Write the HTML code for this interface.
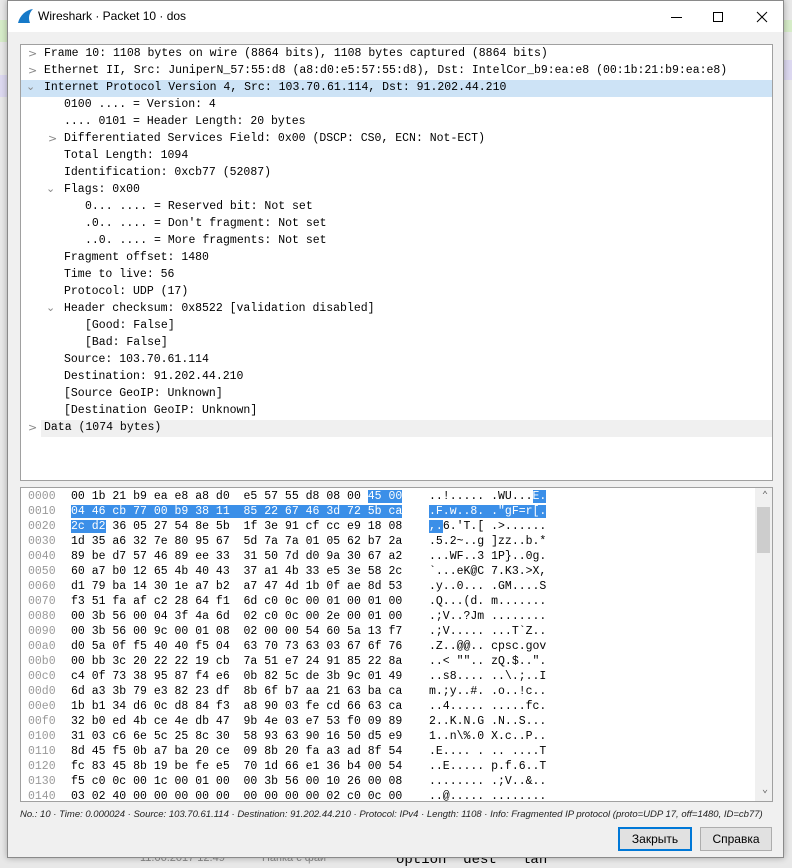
<!DOCTYPE html>
<html><head><meta charset="utf-8"><style>
*{margin:0;padding:0;box-sizing:border-box}
body{width:792px;height:868px;background:#e8e8e8;position:relative;overflow:hidden;font-family:"Liberation Sans",sans-serif}
.win{position:absolute;left:7px;top:0;width:777px;height:858px;background:#f0f0f0;border:1px solid #8a8a8a;box-shadow:0 0 6px rgba(0,0,0,.3)}
.title{position:absolute;left:0;top:0;right:0;height:31px;background:#fff}
.title .t{position:absolute;left:30px;top:8px;font-size:12px;color:#000}
.panel{position:absolute;background:#fff;border:1px solid #a0a0a0}
.mono{font-family:"Liberation Mono",monospace;font-size:11.5px;white-space:pre;color:#000}
.row{position:absolute;left:0;right:0;height:17px;line-height:17px}
.hr{position:absolute;left:0;height:15px;line-height:15px}
.arr{position:absolute;color:#888;font-size:11px;font-family:"DejaVu Sans",sans-serif}
.hl{background:#3b8fe8;color:#fff}
.off{position:absolute;left:7px;color:#999}
.hx{position:absolute;left:50px}
.as{position:absolute;left:408px}
.btn{position:absolute;top:826px;height:24px;border:1px solid #adadad;background:#e1e1e1;font-size:12px;text-align:center;line-height:22px}
</style></head><body>
<div style="position:absolute;left:0;top:20px;width:7px;height:22px;background:#d6ecc8"></div>
<div style="position:absolute;left:0;top:75px;width:7px;height:22px;background:#dcd8f0"></div>
<div style="position:absolute;left:784px;top:20px;width:8px;height:12px;background:#d6ecc8"></div>
<div style="position:absolute;left:784px;top:60px;width:8px;height:20px;background:#dcd8f0"></div>
<div style="position:absolute;left:140px;top:852px;font-size:11px;color:#888">11.06.2017 12:49</div>
<div style="position:absolute;left:262px;top:852px;font-size:11px;color:#888">Папка с фай</div>
<div style="position:absolute;left:396px;top:852px;font-size:14px;color:#000" class="mono">option  dest   lan</div>
<div class="win">
<div class="title">
<svg style="position:absolute;left:9px;top:8px" width="17" height="15" viewBox="0 0 17 15"><path d="M1 14 C3 6 9 1 16 0 C12 4 11 9 13 14 Z" fill="#1679c8"/></svg>
<div class="t">Wireshark · Packet 10 · dos</div>
<svg style="position:absolute;left:658px;top:10px" width="110" height="12"><path d="M5 6.5h11" stroke="#000"/><rect x="47.5" y="1.5" width="9" height="9" fill="none" stroke="#000"/><path d="M91 1l10 10M101 1l-10 10" stroke="#000"/></svg>
</div>
<div class="panel mono" style="left:12px;top:43px;width:753px;height:437px">
<div class="row" style="top:35px;background:#cde3f6"></div>
<div class="row" style="top:375px;left:20px;background:#f0f0f0"></div>
</div>
<div class="mono" style="position:absolute;left:12px;top:44px;width:753px;height:437px">
<span class="arr" style="left:8px;top:2px">&gt;</span><div class="row" style="top:0;left:24px">Frame 10: 1108 bytes on wire (8864 bits), 1108 bytes captured (8864 bits)</div>
<span class="arr" style="left:8px;top:19px">&gt;</span><div class="row" style="top:17px;left:24px">Ethernet II, Src: JuniperN_57:55:d8 (a8:d0:e5:57:55:d8), Dst: IntelCor_b9:ea:e8 (00:1b:21:b9:ea:e8)</div>
<span class="arr" style="left:6px;top:35px">&#8964;</span><div class="row" style="top:34px;left:24px">Internet Protocol Version 4, Src: 103.70.61.114, Dst: 91.202.44.210</div>
<div class="row" style="top:51px;left:44px">0100 .... = Version: 4</div>
<div class="row" style="top:68px;left:44px">.... 0101 = Header Length: 20 bytes</div>
<span class="arr" style="left:28px;top:87px">&gt;</span><div class="row" style="top:85px;left:44px">Differentiated Services Field: 0x00 (DSCP: CS0, ECN: Not-ECT)</div>
<div class="row" style="top:102px;left:44px">Total Length: 1094</div>
<div class="row" style="top:119px;left:44px">Identification: 0xcb77 (52087)</div>
<span class="arr" style="left:26px;top:137px">&#8964;</span><div class="row" style="top:136px;left:44px">Flags: 0x00</div>
<div class="row" style="top:153px;left:65px">0... .... = Reserved bit: Not set</div>
<div class="row" style="top:170px;left:65px">.0.. .... = Don't fragment: Not set</div>
<div class="row" style="top:187px;left:65px">..0. .... = More fragments: Not set</div>
<div class="row" style="top:204px;left:44px">Fragment offset: 1480</div>
<div class="row" style="top:221px;left:44px">Time to live: 56</div>
<div class="row" style="top:238px;left:44px">Protocol: UDP (17)</div>
<span class="arr" style="left:26px;top:256px">&#8964;</span><div class="row" style="top:255px;left:44px">Header checksum: 0x8522 [validation disabled]</div>
<div class="row" style="top:272px;left:65px">[Good: False]</div>
<div class="row" style="top:289px;left:65px">[Bad: False]</div>
<div class="row" style="top:306px;left:44px">Source: 103.70.61.114</div>
<div class="row" style="top:323px;left:44px">Destination: 91.202.44.210</div>
<div class="row" style="top:340px;left:44px">[Source GeoIP: Unknown]</div>
<div class="row" style="top:357px;left:44px">[Destination GeoIP: Unknown]</div>
<span class="arr" style="left:8px;top:376px">&gt;</span><div class="row" style="top:374px;left:24px">Data (1074 bytes)</div>
</div>
<div class="panel mono" style="left:12px;top:486px;width:753px;height:315px;overflow:hidden">
<div style="position:absolute;right:0;top:0;width:17px;height:313px;background:#f0f0f0"></div>
<div style="position:absolute;right:2px;top:19px;width:13px;height:46px;background:#cdcdcd"></div>
<span style="position:absolute;right:4px;top:2px;font-size:10px;color:#606060">&#8963;</span>
<span style="position:absolute;right:4px;top:296px;font-size:10px;color:#606060">&#8964;</span>
<div style="position:absolute;left:0;top:1px">
<div class="hr" style="top:0"><span class="off">0000</span><span class="hx">00 1b 21 b9 ea e8 a8 d0  e5 57 55 d8 08 00 <span class="hl">45 00</span></span><span class="as">..!..... .WU...<span class="hl">E.</span></span></div>
<div class="hr" style="top:15px"><span class="off">0010</span><span class="hx"><span class="hl">04 46 cb 77 00 b9 38 11  85 22 67 46 3d 72 5b ca</span></span><span class="as"><span class="hl">.F.w..8. ."gF=r[.</span></span></div>
<div class="hr" style="top:30px"><span class="off">0020</span><span class="hx"><span class="hl">2c d2</span> 36 05 27 54 8e 5b  1f 3e 91 cf cc e9 18 08</span><span class="as"><span class="hl">,.</span>6.'T.[ .&gt;......</span></div>
<div class="hr" style="top:45px"><span class="off">0030</span><span class="hx">1d 35 a6 32 7e 80 95 67  5d 7a 7a 01 05 62 b7 2a</span><span class="as">.5.2~..g ]zz..b.*</span></div>
<div class="hr" style="top:60px"><span class="off">0040</span><span class="hx">89 be d7 57 46 89 ee 33  31 50 7d d0 9a 30 67 a2</span><span class="as">...WF..3 1P}..0g.</span></div>
<div class="hr" style="top:75px"><span class="off">0050</span><span class="hx">60 a7 b0 12 65 4b 40 43  37 a1 4b 33 e5 3e 58 2c</span><span class="as">`...eK@C 7.K3.&gt;X,</span></div>
<div class="hr" style="top:90px"><span class="off">0060</span><span class="hx">d1 79 ba 14 30 1e a7 b2  a7 47 4d 1b 0f ae 8d 53</span><span class="as">.y..0... .GM....S</span></div>
<div class="hr" style="top:105px"><span class="off">0070</span><span class="hx">f3 51 fa af c2 28 64 f1  6d c0 0c 00 01 00 01 00</span><span class="as">.Q...(d. m.......</span></div>
<div class="hr" style="top:120px"><span class="off">0080</span><span class="hx">00 3b 56 00 04 3f 4a 6d  02 c0 0c 00 2e 00 01 00</span><span class="as">.;V..?Jm ........</span></div>
<div class="hr" style="top:135px"><span class="off">0090</span><span class="hx">00 3b 56 00 9c 00 01 08  02 00 00 54 60 5a 13 f7</span><span class="as">.;V..... ...T`Z..</span></div>
<div class="hr" style="top:150px"><span class="off">00a0</span><span class="hx">d0 5a 0f f5 40 40 f5 04  63 70 73 63 03 67 6f 76</span><span class="as">.Z..@@.. cpsc.gov</span></div>
<div class="hr" style="top:165px"><span class="off">00b0</span><span class="hx">00 bb 3c 20 22 22 19 cb  7a 51 e7 24 91 85 22 8a</span><span class="as">..&lt; "".. zQ.$..".</span></div>
<div class="hr" style="top:180px"><span class="off">00c0</span><span class="hx">c4 0f 73 38 95 87 f4 e6  0b 82 5c de 3b 9c 01 49</span><span class="as">..s8.... ..\.;..I</span></div>
<div class="hr" style="top:195px"><span class="off">00d0</span><span class="hx">6d a3 3b 79 e3 82 23 df  8b 6f b7 aa 21 63 ba ca</span><span class="as">m.;y..#. .o..!c..</span></div>
<div class="hr" style="top:210px"><span class="off">00e0</span><span class="hx">1b b1 34 d6 0c d8 84 f3  a8 90 03 fe cd 66 63 ca</span><span class="as">..4..... .....fc.</span></div>
<div class="hr" style="top:225px"><span class="off">00f0</span><span class="hx">32 b0 ed 4b ce 4e db 47  9b 4e 03 e7 53 f0 09 89</span><span class="as">2..K.N.G .N..S...</span></div>
<div class="hr" style="top:240px"><span class="off">0100</span><span class="hx">31 03 c6 6e 5c 25 8c 30  58 93 63 90 16 50 d5 e9</span><span class="as">1..n\%.0 X.c..P..</span></div>
<div class="hr" style="top:255px"><span class="off">0110</span><span class="hx">8d 45 f5 0b a7 ba 20 ce  09 8b 20 fa a3 ad 8f 54</span><span class="as">.E.... . .. ....T</span></div>
<div class="hr" style="top:270px"><span class="off">0120</span><span class="hx">fc 83 45 8b 19 be fe e5  70 1d 66 e1 36 b4 00 54</span><span class="as">..E..... p.f.6..T</span></div>
<div class="hr" style="top:285px"><span class="off">0130</span><span class="hx">f5 c0 0c 00 1c 00 01 00  00 3b 56 00 10 26 00 08</span><span class="as">........ .;V..&amp;..</span></div>
<div class="hr" style="top:300px"><span class="off">0140</span><span class="hx">03 02 40 00 00 00 00 00  00 00 00 00 02 c0 0c 00</span><span class="as">..@..... ........</span></div>
</div>
</div>
<div style="position:absolute;left:12px;top:808px;font-size:9.5px;font-style:italic;color:#222;white-space:nowrap">No.: 10 · Time: 0.000024 · Source: 103.70.61.114 · Destination: 91.202.44.210 · Protocol: IPv4 · Length: 1108 · Info: Fragmented IP protocol (proto=UDP 17, off=1480, ID=cb77)</div>
<div class="btn" style="left:610px;width:74px;border:2px solid #0078d7;line-height:20px">Закрыть</div>
<div class="btn" style="left:692px;width:72px">Справка</div>
</div>
</body></html>
